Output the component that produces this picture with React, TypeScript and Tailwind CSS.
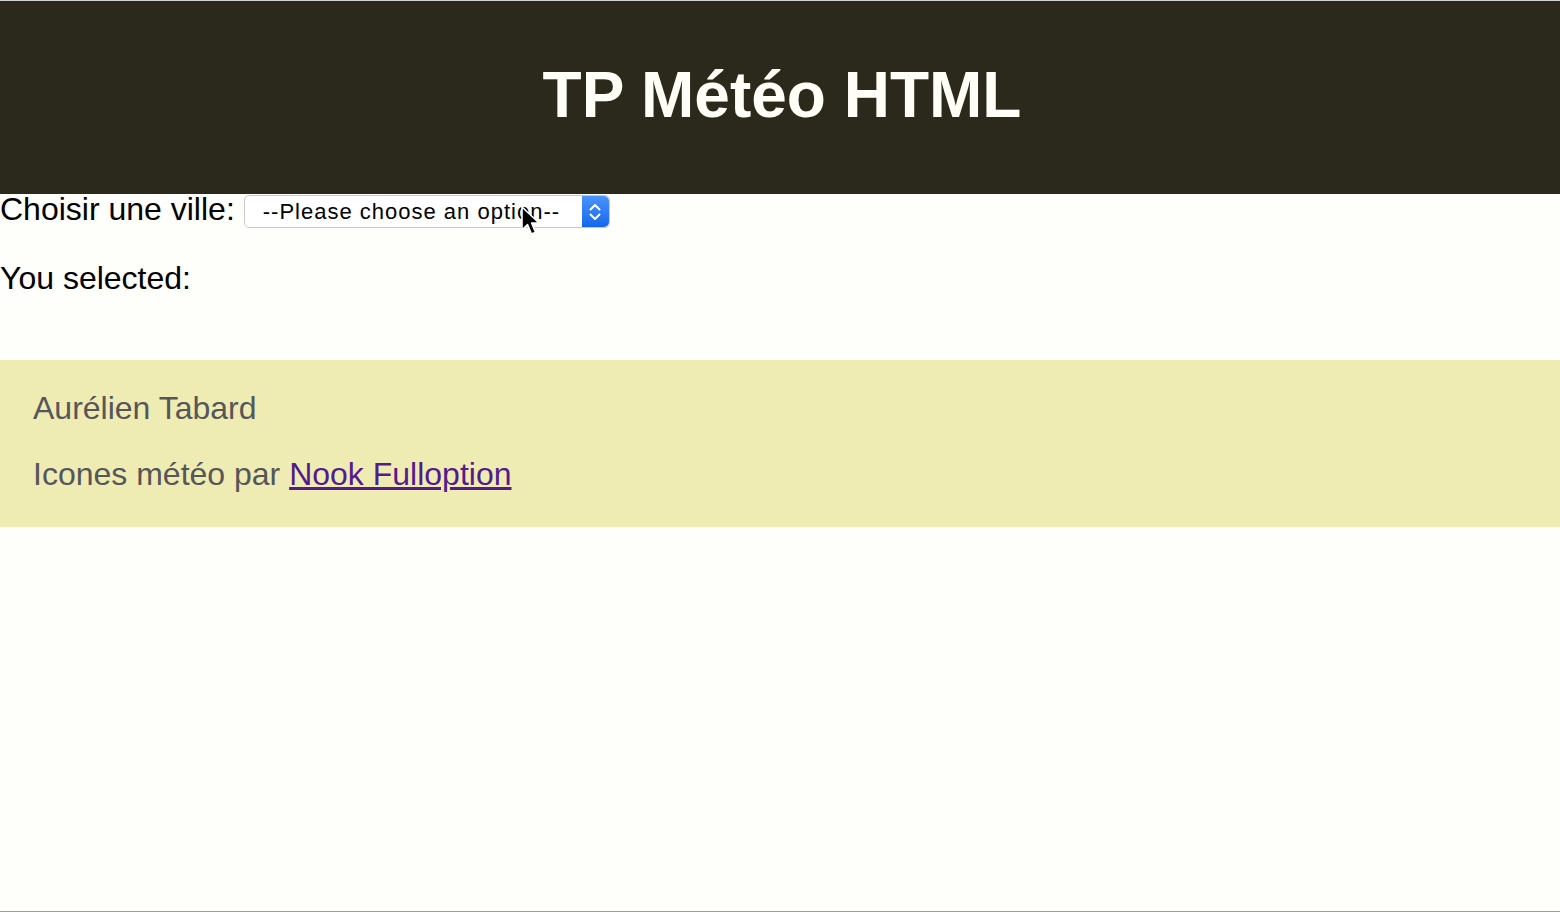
import React from "react";

function Stepper() {
  return (
    <div className="flex h-full w-[27px] flex-col items-center justify-center gap-[2px] rounded-r-[5px] bg-gradient-to-b from-[#4a94fb] to-[#1466ee]">
      <svg width="12" height="8" viewBox="0 0 12 8" fill="none">
        <path d="M1.5 6.5 L6 2 L10.5 6.5" stroke="white" strokeWidth="2" strokeLinecap="round" strokeLinejoin="round" />
      </svg>
      <svg width="12" height="8" viewBox="0 0 12 8" fill="none">
        <path d="M1.5 1.5 L6 6 L10.5 1.5" stroke="white" strokeWidth="2" strokeLinecap="round" strokeLinejoin="round" />
      </svg>
    </div>
  );
}

function Cursor() {
  return (
    <svg
      className="absolute left-[521px] top-[12px]"
      width="22"
      height="32"
      viewBox="0 0 22 32"
    >
      <path
        d="M1 1 L1 24 L6.5 18.5 L10.5 28 L14.5 26.3 L10.6 17 L18 17 Z"
        fill="black"
        stroke="white"
        strokeWidth="1.6"
        strokeLinejoin="round"
      />
    </svg>
  );
}

export default function App() {
  return (
    <div className="h-[912px] w-full border-t border-b border-t-[#d2d2d2] border-b-[#9c9c9c] bg-[#fefefb] font-['Liberation_Sans',Arial,sans-serif] text-black">
      {/* header */}
      <header className="flex h-[193px] justify-center bg-[#2a291c] pt-[62px]">
        <h1 className="pl-[4px] text-[64px] font-bold leading-[64px] text-[#fffff8]">TP Météo HTML</h1>
      </header>

      {/* city picker */}
      <div className="relative flex items-start">
        <label className="text-[32px] leading-[31px]">Choisir une ville:</label>
        <div className="ml-[9px] mt-[1px] flex h-[33px] w-[366px] items-center justify-between rounded-[5px] border border-[#c9c9c9] bg-white pl-[18px]">
          <span className="text-[22px] tracking-[1px] text-black">--Please choose an option--</span>
          <Stepper />
        </div>
        <Cursor />
      </div>

      <p className="mt-[34px] text-[32px] leading-[32px]">You selected:</p>

      {/* footer */}
      <footer className="mt-[66px] bg-[#eeecb2] px-[33px] pb-[37px] pt-[32px] text-[32px] leading-[32px] text-[#56565a]">
        <p>Aurélien Tabard</p>
        <p className="mt-[34px]">
          Icones météo par{" "}
          <a href="#" className="text-[#551a8b] underline">
            Nook Fulloption
          </a>
        </p>
      </footer>
    </div>
  );
}
